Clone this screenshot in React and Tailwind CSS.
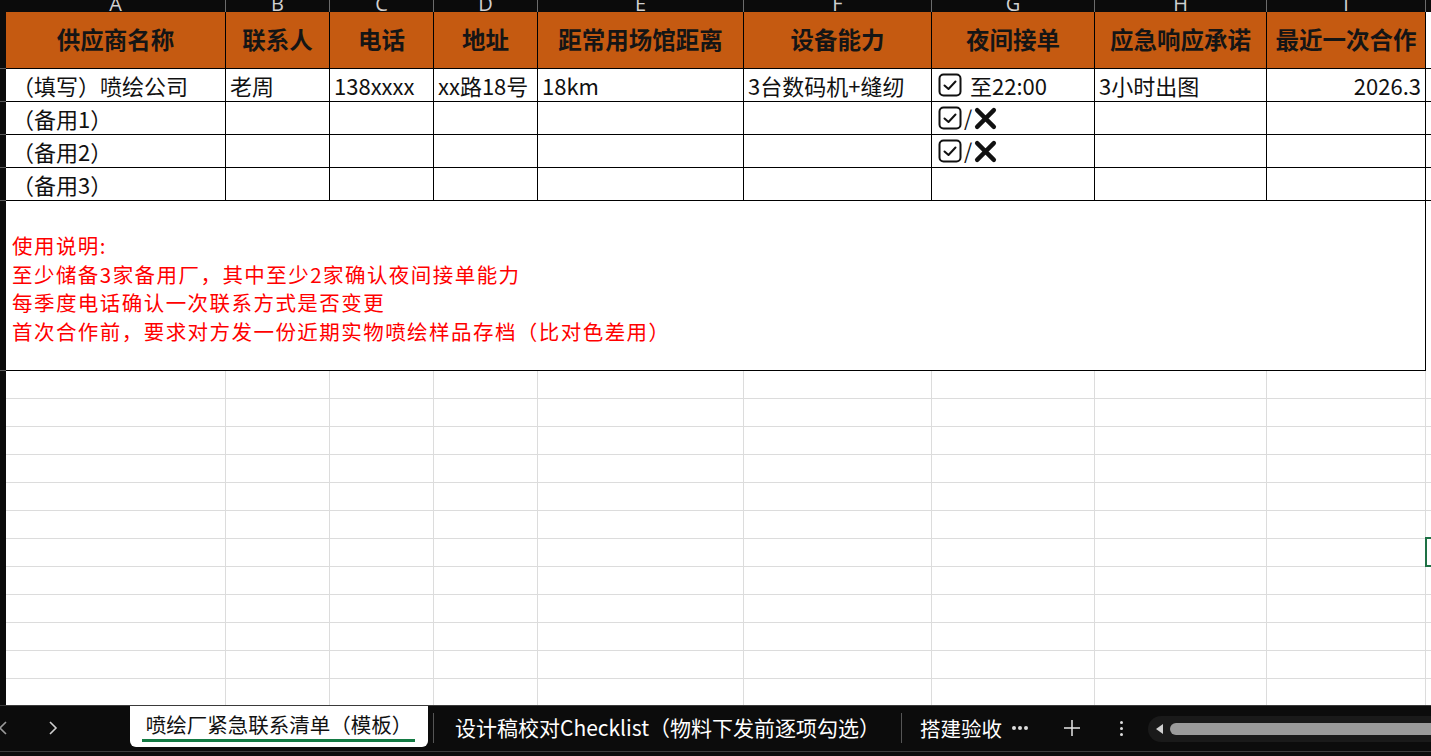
import React from 'react';

const cols = [
  { key: 'A', w: 'w-[220px]', title: '供应商名称' },
  { key: 'B', w: 'w-[104px]', title: '联系人' },
  { key: 'C', w: 'w-[104px]', title: '电话' },
  { key: 'D', w: 'w-[104px]', title: '地址' },
  { key: 'E', w: 'w-[206px]', title: '距常用场馆距离' },
  { key: 'F', w: 'w-[188px]', title: '设备能力' },
  { key: 'G', w: 'w-[163px]', title: '夜间接单' },
  { key: 'H', w: 'w-[172px]', title: '应急响应承诺' },
  { key: 'I', w: 'w-[159px]', title: '最近一次合作' },
];

function CheckBox() {
  return (
    <svg width="24" height="24" viewBox="0 0 24 24" className="shrink-0">
      <rect x="1.5" y="1.5" width="21" height="21" rx="4" fill="none" stroke="#111" strokeWidth="2" />
      <path d="M6.5 12.5 L10.5 16 L17.5 8.5" fill="none" stroke="#111" strokeWidth="2" strokeLinecap="round" strokeLinejoin="round" />
    </svg>
  );
}

function Cross() {
  return (
    <svg width="23" height="23" viewBox="0 0 22 22" className="shrink-0">
      <path d="M3 3 L19 19 M19 3 L3 19" stroke="#111" strokeWidth="4.2" strokeLinecap="round" />
    </svg>
  );
}

function Cell({ w, children, right }) {
  return (
    <div
      className={`${w} h-full shrink-0 flex items-center px-[4px] overflow-hidden whitespace-nowrap border-r border-black ${
        right ? 'justify-end' : ''
      }`}
    >
      {children}
    </div>
  );
}

const rows = [
  ['（填写）喷绘公司', '老周', '138xxxx', 'xx路18号', '18km', '3台数码机+缝纫', 'yes', '3小时出图', '2026.3'],
  ['（备用1）', '', '', '', '', '', 'either', '', ''],
  ['（备用2）', '', '', '', '', '', 'either', '', ''],
  ['（备用3）', '', '', '', '', '', '', '', ''],
];

function NightCell({ kind }) {
  if (kind === 'yes')
    return (
      <div className="flex items-center gap-[8px] pl-[2px]">
        <CheckBox />
        <span>至22:00</span>
      </div>
    );
  if (kind === 'either')
    return (
      <div className="flex items-center gap-[2px] pl-[2px]">
        <CheckBox />
        <span className="text-[21px]">/</span>
        <Cross />
      </div>
    );
  return null;
}

export default function App() {
  const font = { fontFamily: '"Noto Sans CJK SC", "Noto Sans", sans-serif' };
  return (
    <div className="w-[1431px] h-[756px] bg-white overflow-hidden relative flex flex-col" style={font}>
      {/* column letters */}
      <div className="h-[12px] bg-[#0b0b0b] flex shrink-0 overflow-hidden">
        <div className="w-[6px] shrink-0" />
        {cols.map((c) => (
          <div
            key={c.key}
            className={`${c.w} shrink-0 border-r border-[#6b6b6b] flex justify-center items-end text-[#d0d0d0] text-[20px] leading-none`}
          >
            <span className="-mb-[2px]" style={{ fontFamily: '"Open Sans", sans-serif' }}>{c.key}</span>
          </div>
        ))}
        <div className="flex-1" />
      </div>

      <div className="flex flex-1 min-h-0">
        {/* row header strip */}
        <div className="w-[6px] shrink-0 bg-[#0b0b0b] flex flex-col">
          <div className="h-[57px] border-b border-[#5a5a5a]" />
          <div className="h-[33px] border-b border-[#5a5a5a]" />
          <div className="h-[33px] border-b border-[#5a5a5a]" />
          <div className="h-[33px] border-b border-[#5a5a5a]" />
          <div className="h-[33px] border-b border-[#5a5a5a]" />
          <div className="h-[170px] border-b border-[#5a5a5a]" />
        </div>

        <div className="flex flex-col flex-1 min-w-0">
          {/* header row */}
          <div className="h-[57px] flex bg-[#c55a11] border-b border-black shrink-0">
            {cols.map((c) => (
              <div
                key={c.key}
                className={`${c.w} shrink-0 flex items-center justify-center text-[23.5px] font-bold text-[#151515] border-r border-black whitespace-nowrap`}
              >
                {c.title}
              </div>
            ))}
            <div className="flex-1 bg-white" />
          </div>

          {rows.map((r, ri) => (
            <div key={ri} className="h-[33px] flex border-b border-black shrink-0 text-[22px] text-[#111]">
              {cols.map((c, ci) => (
                <Cell key={c.key} w={c.w} right={ci === 8}>
                  {ci === 6 ? <NightCell kind={r[6]} /> : ci === 0 ? <span className="pl-[2px]">{r[0]}</span> : r[ci]}
                </Cell>
              ))}
              <div className="flex-1 bg-white" />
            </div>
          ))}

          {/* merged notes */}
          <div className="h-[170px] flex shrink-0">
            <div className="w-[1420px] shrink-0 border-r border-b border-black px-[6px] pt-[30px] text-[20.5px] leading-[28.7px] tracking-[1.45px] text-[#ff0000]">
              <div>使用说明:</div>
              <div>至少储备3家备用厂，其中至少2家确认夜间接单能力</div>
              <div>每季度电话确认一次联系方式是否变更</div>
              <div>首次合作前，要求对方发一份近期实物喷绘样品存档（比对色差用）</div>
            </div>
            <div className="flex-1" />
          </div>

          {/* empty grid */}
          <div className="flex-1 relative overflow-hidden">
            {Array.from({ length: 12 }).map((_, i) => (
              <div key={i} className="h-[28px] flex border-b border-[#dcdcdc]">
                {cols.map((c) => (
                  <div key={c.key} className={`${c.w} shrink-0 border-r border-[#dcdcdc]`} />
                ))}
              </div>
            ))}
            <div className="absolute left-[1419px] top-[166px] w-[10px] h-[30px] border-2 border-[#1e7145]" />
          </div>
        </div>
      </div>

      {/* sheet tabs */}
      <div className="h-[51px] shrink-0 bg-[#0c0c0c] border-t border-[#3a3a3a] flex items-start relative">
        <div className="flex items-center h-[44px] w-[130px] shrink-0">
          <svg width="8" height="18" viewBox="0 0 8 18">
            <path d="M6 3 L0 9 L6 15" fill="none" stroke="#9a9a9a" strokeWidth="1.6" />
          </svg>
          <svg width="14" height="18" viewBox="0 0 14 18" className="ml-[38px]">
            <path d="M4 3 L10 9 L4 15" fill="none" stroke="#cfcfcf" strokeWidth="1.6" />
          </svg>
        </div>
        <div className="w-[298px] shrink-0 h-[41px] bg-white rounded-b-[6px] flex items-center justify-center relative">
          <span className="text-[20.5px] text-[#111] mt-[-4px] whitespace-nowrap">喷绘厂紧急联系清单（模板）</span>
          <div className="absolute bottom-[5px] left-[12px] right-[13px] h-[3px] bg-[#137a43]" />
        </div>
        <div className="w-px h-[30px] bg-[#555] ml-[5px] mt-[7px] shrink-0" />
        <div className="w-[467px] shrink-0 h-[44px] flex items-center pl-[21px] text-[21px] text-white whitespace-nowrap overflow-hidden">
          设计稿校对Checklist（物料下发前逐项勾选）
        </div>
        <div className="w-px h-[30px] bg-[#555] mt-[7px] shrink-0" />
        <div className="w-[110px] shrink-0 h-[44px] flex items-center pl-[18px] text-[20.5px] text-white whitespace-nowrap">
          搭建验收
        </div>
        <div className="w-[22px] shrink-0 h-[44px] flex items-center gap-[2px]">
          <div className="w-[4px] h-[4px] bg-[#ddd] rounded-full" />
          <div className="w-[4px] h-[4px] bg-[#ddd] rounded-full" />
          <div className="w-[4px] h-[4px] bg-[#ddd] rounded-full" />
        </div>
        <div className="w-[76px] shrink-0 h-[44px] flex items-center justify-center">
          <svg width="18" height="18" viewBox="0 0 18 18">
            <path d="M9 1 V17 M1 9 H17" stroke="#e6e6e6" strokeWidth="1.5" />
          </svg>
        </div>
        <div className="w-[22px] shrink-0 h-[44px] flex flex-col items-center justify-center gap-[3px]">
          <div className="w-[3px] h-[3px] bg-[#ddd] rounded-full" />
          <div className="w-[3px] h-[3px] bg-[#ddd] rounded-full" />
          <div className="w-[3px] h-[3px] bg-[#ddd] rounded-full" />
        </div>
        <div className="flex-1 h-[26px] mt-[10px] ml-[16px] bg-[#1a1a1a] rounded-l-[13px] flex items-center pl-[6px]">
          <svg width="10" height="12" viewBox="0 0 10 12">
            <path d="M9 1 L2 6 L9 11 Z" fill="#d0d0d0" />
          </svg>
          <div className="flex-1 h-[12px] ml-[6px] bg-[#9b9b9b] rounded-l-[6px]" />
        </div>
        <div className="absolute left-0 right-0 bottom-[4px] h-px bg-[#3c3c3c]" />
      </div>
    </div>
  );
}
